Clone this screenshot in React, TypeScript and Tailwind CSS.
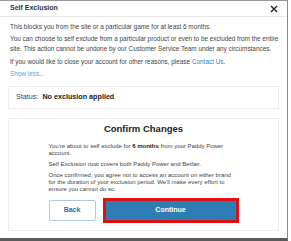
import React from "react";

export default function App() {
  return (
    <div className="w-[291px] h-[241px] bg-white overflow-hidden" style={{ fontFamily: '"Liberation Sans", Arial, sans-serif' }}>
      <div className="w-[288px] h-[241px] border-t border-t-[#9a9a9a] border-r border-r-[#8a8a8a] border-b-[3px] border-b-[#5a5a5a] flex flex-col">
        <div className="h-[16px] flex items-center justify-between pl-[10px] pr-[9px] border-b border-b-[#e6e6e6]">
          <span className="text-[7px] font-bold text-[#333]">Self Exclusion</span>
          <svg width="8" height="8" viewBox="0 0 8 8" className="mt-[1px]">
            <path d="M1 1 L7 7 M7 1 L1 7" stroke="#222" strokeWidth="1.4" />
          </svg>
        </div>
        <div className="pl-[10px] pr-[8px] pt-[5px] text-[6.4px] leading-[10px] text-[#444]">
          <p>This blocks you from the site or a particular game for at least 6 months.</p>
          <p className="mt-[2px]">You can choose to self exclude from a particular product or even to be excluded from the entire site. This action cannot be undone by our Customer Service Team under any circumstances.</p>
          <p className="mt-[3px]">If you would like to close your account for other reasons, please <span className="text-[#2a86c9]">Contact Us</span>.</p>
          <p className="mt-[2px] text-[#5aa6dc]">Show less...</p>
        </div>
        <div className="mx-[8px] mt-[7px] h-[23px] border border-[#ececec] flex items-center pl-[7px] text-[7.2px] text-[#444]">
          <span>Status:</span>
          <span className="ml-[4px] font-bold text-[#222]">No exclusion applied</span>
        </div>
        <div className="mx-[8px] mt-[9px] h-[113px] border border-[#ececec] flex flex-col items-center">
          <div className="mt-[4px] text-[9.5px] font-bold text-[#222] leading-[12px]">Confirm Changes</div>
          <div className="w-[190px] mt-[8px] text-[6px] leading-[7px] text-[#444]">
            <p>
              You're about to self exclude for <span className="font-bold text-[#222]">6 months</span> from your Paddy Power
              <br />
              account.
            </p>
            <p className="mt-[4px]">Self Exclusion now covers both Paddy Power and Betfair.</p>
            <p className="mt-[4px]">Once confirmed, you agree not to access an account on either brand for the duration of your exclusion period. We'll make every effort to ensure you cannot do so.</p>
          </div>
          <div className="w-[190px] mt-[5px] flex items-center">
            <div className="w-[47px] h-[21px] border border-[#a9cce6] rounded-[2px] flex items-center justify-center text-[7px] font-bold text-[#2f6fa6]">Back</div>
            <div className="ml-[7px] w-[136px] h-[25px] bg-[#dd1111] p-[3px]">
              <div className="w-full h-full bg-[#2e7db4] flex items-center justify-center text-[7px] font-bold text-white">Continue</div>
            </div>
          </div>
        </div>
      </div>
    </div>
  );
}
